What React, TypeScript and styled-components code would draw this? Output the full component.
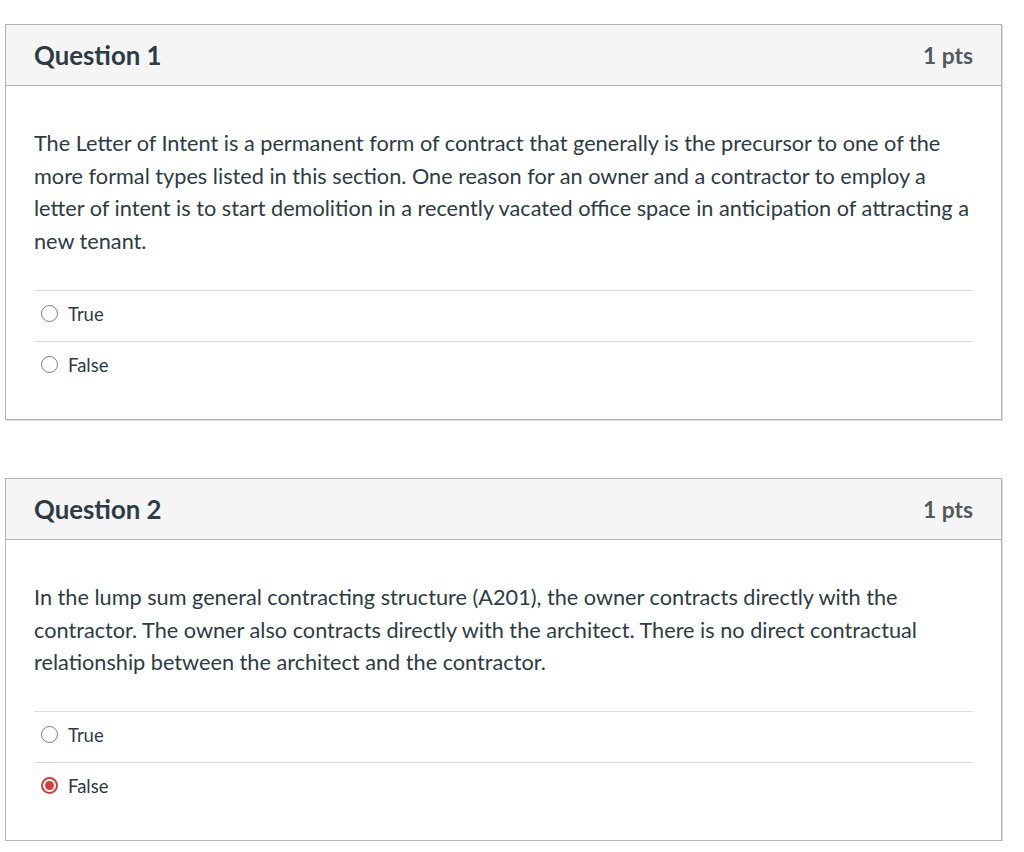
import React from "react";
import styled, { createGlobalStyle } from "styled-components";

const GlobalStyle = createGlobalStyle`
  body {
    margin: 0;
    background: #ffffff;
    font-family: Lato, "Open Sans", sans-serif;
    color: #2d3b45;
  }
`;

const Page = styled.div`
  display: flex;
  flex-direction: column;
  gap: 58px;
  padding: 24px 0 0 5px;
  width: 997px;
`;

const Card = styled.section`
  border: 1px solid #b4b4b4;
  box-shadow: 1px 1px 0 #dcdcdc;
  background: #fff;
`;

const Header = styled.header`
  display: flex;
  justify-content: space-between;
  align-items: center;
  height: 60px;
  padding: 0 28px;
  background: #f5f5f5;
  border-bottom: 1px solid #b4b4b4;
`;

const Title = styled.h2`
  margin: 0;
  font-size: 25.8px;
  font-weight: 700;
  color: #2d3b45;
`;

const Points = styled.span`
  font-size: 22.8px;
  font-weight: 700;
  color: #545a5e;
`;

const Body = styled.div`
  padding: 41px 28px 27px;
`;

const Text = styled.p`
  margin: 0 0 32px;
  font-size: 21.7px;
  line-height: 32.7px;
  color: #2d3b45;
`;

const Answer = styled.label`
  box-sizing: border-box;
  display: flex;
  align-items: center;
  gap: 10px;
  height: 51px;
  padding: 0 7px 4px;
  border-top: 1px solid #dcdcdc;
  font-size: 18.5px;
  color: #2d3b45;
`;

const Radio = styled.span<{ $checked?: boolean }>`
  box-sizing: border-box;
  width: 17px;
  height: 17px;
  border-radius: 50%;
  border: ${(p) => (p.$checked ? "2px solid #d23c3c" : "1.5px solid #7b7b7b")};
  display: flex;
  align-items: center;
  justify-content: center;
  background: #fff;

  &::after {
    content: "";
    display: ${(p) => (p.$checked ? "block" : "none")};
    width: 9px;
    height: 9px;
    border-radius: 50%;
    background: #d23c3c;
  }
`;

type Q = {
  title: string;
  text: string;
  selected?: string;
};

const questions: Q[] = [
  {
    title: "Question 1",
    text:
      "The Letter of Intent is a permanent form of contract that generally is the precursor to one of the more formal types listed in this section. One reason for an owner and a contractor to employ a letter of intent is to start demolition in a recently vacated office space in anticipation of attracting a new tenant.",
  },
  {
    title: "Question 2",
    text:
      "In the lump sum general contracting structure (A201), the owner contracts directly with the contractor. The owner also contracts directly with the architect. There is no direct contractual relationship between the architect and the contractor.",
    selected: "False",
  },
];

const App: React.FC = () => {
  return (
    <>
      <GlobalStyle />
      <Page>
        {questions.map((q) => (
          <Card key={q.title}>
            <Header>
              <Title>{q.title}</Title>
              <Points>1 pts</Points>
            </Header>
            <Body>
              <Text>{q.text}</Text>
              {["True", "False"].map((a) => (
                <Answer key={a}>
                  <Radio $checked={q.selected === a} />
                  {a}
                </Answer>
              ))}
            </Body>
          </Card>
        ))}
      </Page>
    </>
  );
};

export default App;
